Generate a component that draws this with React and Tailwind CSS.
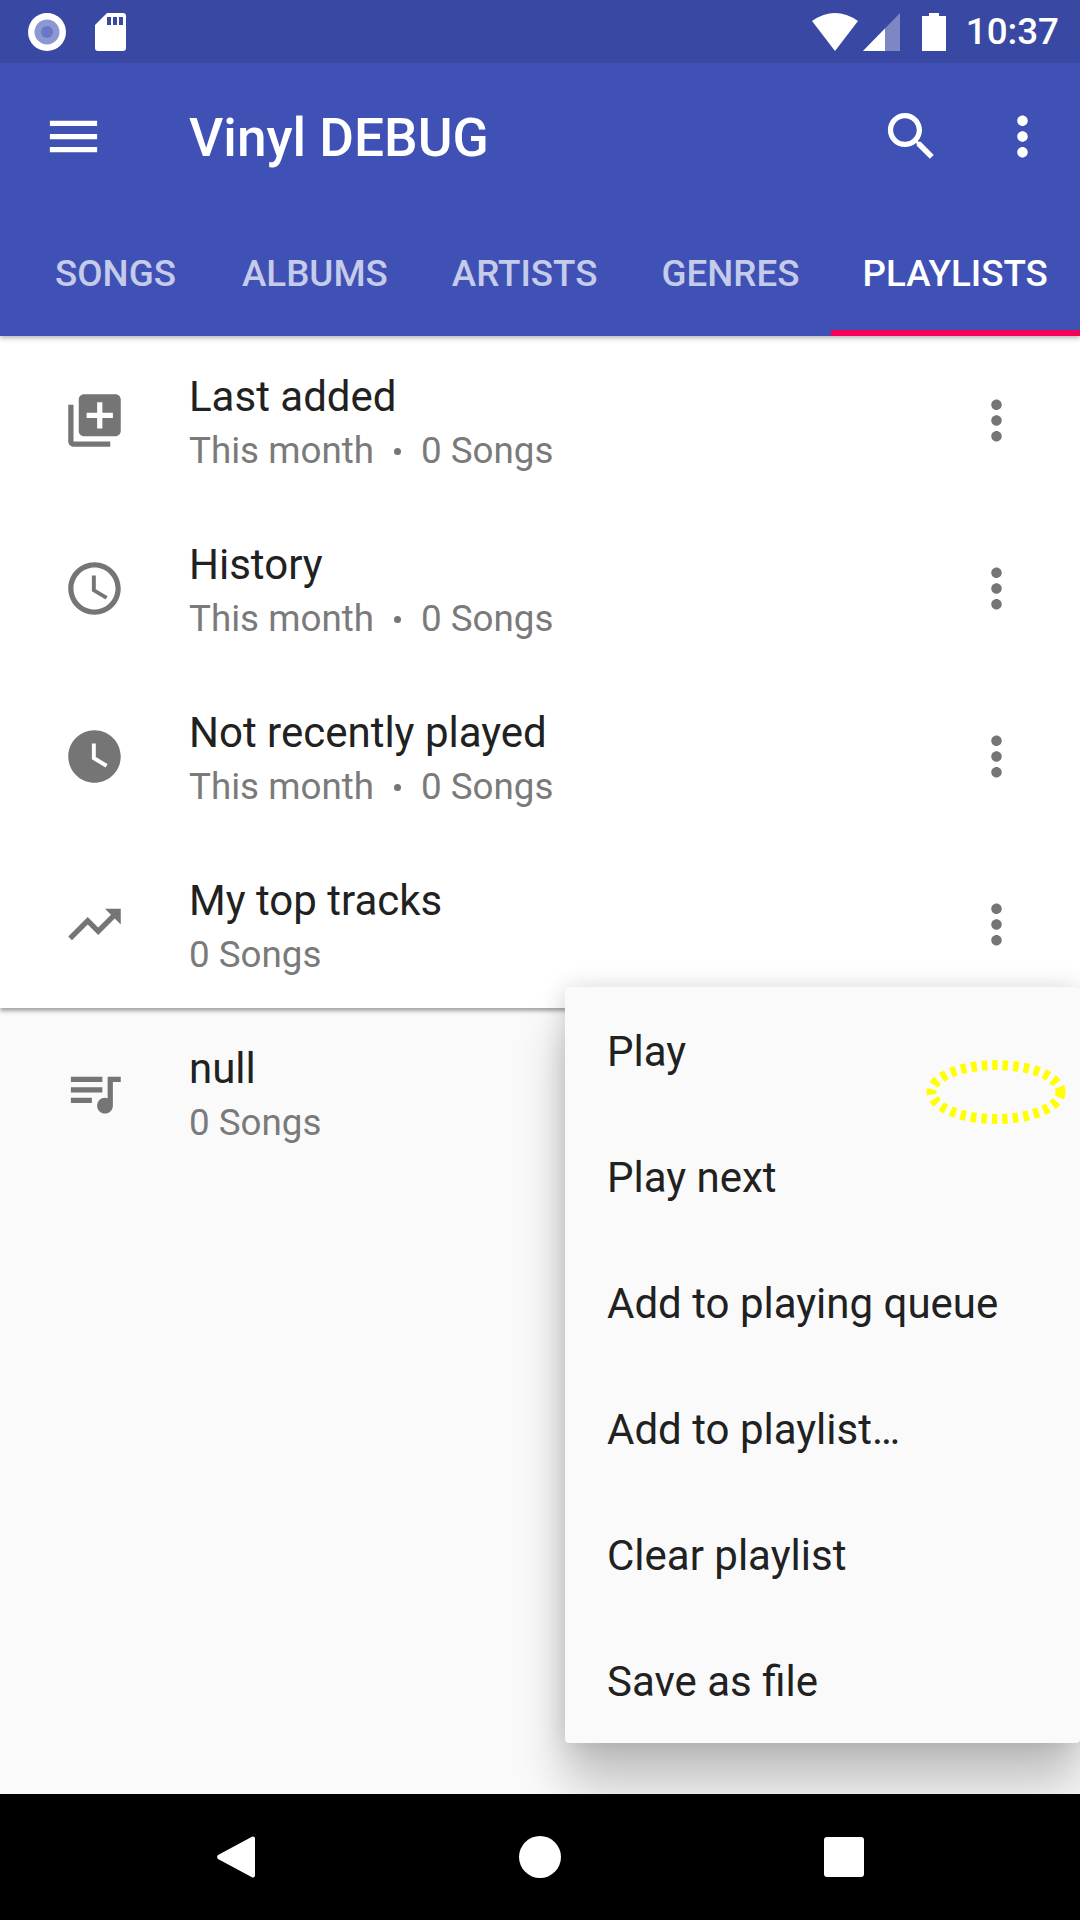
const iconPaths = {
    menu: 'M3 18h18v-2H3v2zm0-5h18v-2H3v2zm0-7v2h18V6H3z',
    search: 'M15.5 14h-.79l-.28-.27C15.41 12.59 16 11.11 16 9.5 16 5.91 13.09 3 9.5 3S3 5.91 3 9.5 5.91 16 9.5 16c1.61 0 3.09-.59 4.23-1.57l.27.28v.79l5 4.99L20.49 19l-4.99-5zm-6 0C7.01 14 5 11.99 5 9.5S7.01 5 9.5 5 14 7.01 14 9.5 11.99 14 9.5 14z',
    more: 'M12 8c1.1 0 2-.9 2-2s-.9-2-2-2-2 .9-2 2 .9 2 2 2zm0 2c-1.1 0-2 .9-2 2s.9 2 2 2 2-.9 2-2-.9-2-2-2zm0 6c-1.1 0-2 .9-2 2s.9 2 2 2 2-.9 2-2-.9-2-2-2z',
    libraryAdd: 'M4 6H2v14c0 1.1.9 2 2 2h14v-2H4V6zm16-4H8c-1.1 0-2 .9-2 2v12c0 1.1.9 2 2 2h12c1.1 0 2-.9 2-2V4c0-1.1-.9-2-2-2zm-1 9h-4v4h-2v-4H9V9h4V5h2v4h4v2z',
    accessTime: 'M11.99 2C6.47 2 2 6.48 2 12s4.47 10 9.99 10C17.52 22 22 17.52 22 12S17.52 2 11.99 2zM12 20c-4.42 0-8-3.58-8-8s3.58-8 8-8 8 3.58 8 8-3.58 8-8 8zm.5-13H11v6l5.25 3.15.75-1.23-4.5-2.67z',
    watchLater: 'M12 2C6.5 2 2 6.5 2 12s4.5 10 10 10 10-4.5 10-10S17.5 2 12 2zm4.2 14.2L11 13V7h1.5v5.2l4.5 2.7-.8 1.3z',
    trendingUp: 'M16 6l2.29 2.29-4.88 4.88-4-4L2 16.59 3.41 18l6-6 4 4 6.3-6.29L22 12V6z',
    queueMusic: 'M15 6H3v2h12V6zm0 4H3v2h12v-2zM3 16h8v-2H3v2zM17 6v8.18c-.31-.11-.65-.18-1-.18-1.66 0-3 1.34-3 3s1.34 3 3 3 3-1.34 3-3V8h3V6h-5z',
};

function Icon({ name, className }) {
    return (
        <svg viewBox="0 0 24 24" className={`w-[63px] h-[63px] shrink-0 fill-current ${className}`}>
            <path d={iconPaths[name]} />
        </svg>
    );
}

const tabs = [
    { label: 'SONGS', className: 'pl-[32px] pr-[34px]' },
    { label: 'ALBUMS', className: 'px-[32px]' },
    { label: 'ARTISTS', className: 'px-[32px]' },
    { label: 'GENRES', className: 'pl-[32px] pr-[31px]' },
];

const playlists = [
    { icon: 'libraryAdd', title: 'Last added', month: true },
    { icon: 'accessTime', title: 'History', month: true },
    { icon: 'watchLater', title: 'Not recently played', month: true },
    { icon: 'trendingUp', title: 'My top tracks' },
];

const menuItems = ['Play', 'Play next', 'Add to playing queue', 'Add to playlist…', 'Clear playlist', 'Save as file'];

function PlaylistRow({ icon, title, month }) {
    return (
        <div className="h-[168px] flex items-center pl-[63px] pr-[52px]">
            <Icon name={icon} className="text-[#757575]" />
            <div className="ml-[63px] flex-1 min-w-0 pt-[8px]">
                <div className="text-[42px] leading-[54px] text-[#212121]">{title}</div>
                <div className="text-[36.75px] leading-[54px] text-[#7a7a7a] flex items-center">
                    {month && <span>This month</span>}
                    {month && (
                        <span className="w-[47px] flex justify-center">
                            <span className="w-[7px] h-[7px] rounded-full bg-[#757575]" />
                        </span>
                    )}
                    <span>0 Songs</span>
                </div>
            </div>
            <Icon name="more" className="text-[#757575]" />
        </div>
    );
}

function StatusBar() {
    return (
        <div className="h-[63px] bg-[#3949a3] flex items-center pl-[28px] pr-[21px]">
            <svg viewBox="0 0 38 38" className="w-[38px] h-[38px]">
                <circle cx="19" cy="19" r="19" fill="#ffffff" />
                <circle cx="19" cy="19" r="12.5" fill="#8c97d3" />
                <circle cx="19" cy="19" r="6" fill="#6a78c4" />
            </svg>
            <svg viewBox="0 0 31 38" className="w-[31px] h-[38px] ml-[29px]">
                <path d="M12 0h16a3 3 0 0 1 3 3v32a3 3 0 0 1-3 3H3a3 3 0 0 1-3-3V12z" fill="#ffffff" />
                <path d="M12 4h4v8h-4zM18 4h4v8h-4zM24 4h4v8h-4z" fill="#3949a3" />
            </svg>
            <div className="flex-1" />
            <svg viewBox="0 0 46 38" className="w-[46px] h-[38px]">
                <path d="M23 38L0 8Q23-8 46 8z" fill="#ffffff" />
            </svg>
            <svg viewBox="0 0 37 38" className="w-[37px] h-[38px] ml-[5px]">
                <path d="M0 38L37 0v38z" fill="#7c87c4" />
                <path d="M0 38L22 15.4V38z" fill="#ffffff" />
            </svg>
            <svg viewBox="0 0 24 38" className="w-[24px] h-[38px] ml-[22px]">
                <path d="M7 0h10v3h7v35H0V3h7z" fill="#ffffff" />
            </svg>
            <span className="ml-[20px] pt-[1px] text-[36.75px] leading-none font-medium text-white">10:37</span>
        </div>
    );
}

function Toolbar() {
    return (
        <div className="h-[147px] bg-[#3f51b5] flex items-center pl-[42px] pr-[26px] text-white">
            <Icon name="menu" />
            <span className="ml-[84px] flex-1 pt-[4px] text-[53.2px] font-medium leading-none">Vinyl DEBUG</span>
            <Icon name="search" />
            <Icon name="more" className="ml-[48px]" />
        </div>
    );
}

function Tabs() {
    return (
        <div className="h-[126px] bg-[#3f51b5] flex pl-[23px] text-[36.75px] font-medium">
            {tabs.map(tab => (
                <div key={tab.label} className={`pt-[2px] flex items-center text-[#c5cbe9] ${tab.className}`}>{tab.label}</div>
            ))}
            <div className="flex-1 flex items-center justify-center text-white border-b-[6px] border-[#f50057] pt-[8px]">PLAYLISTS</div>
        </div>
    );
}

function PopupMenu() {
    return (
        <div className="absolute top-[651px] right-0 w-[515px] rounded-[4px] bg-[#fafafa] shadow-[0_40px_50px_rgba(0,0,0,0.24),0_0_24px_rgba(0,0,0,0.14)]">
            {menuItems.map(item => (
                <div key={item} className="h-[126px] flex items-center pl-[42px] pt-[2px] text-[42px] text-[#212121]">{item}</div>
            ))}
            {/* touch pointer marker */}
            <svg viewBox="0 0 140 66" className="absolute top-[72px] left-[361px] w-[140px] h-[66px]">
                <ellipse cx="70" cy="33" rx="64.5" ry="27" fill="none" stroke="#ffff00" strokeWidth="10" strokeDasharray="5.5 5" />
            </svg>
        </div>
    );
}

export default function App() {
    return (
        <div className="w-[1080px] h-[1920px] flex flex-col overflow-hidden bg-[#fafafa] font-['Roboto',sans-serif]">
            <div className="relative z-20 shadow-[0_2px_5px_rgba(0,0,0,0.3)]">
                <StatusBar />
                <Toolbar />
                <Tabs />
            </div>
            <div className="relative flex-1 overflow-hidden">
                <div className="bg-white shadow-[0_3px_4px_rgba(0,0,0,0.35)]">
                    {playlists.map(row => <PlaylistRow key={row.title} {...row} />)}
                </div>
                <PlaylistRow icon="queueMusic" title="null" />
                <PopupMenu />
            </div>
            <div className="h-[126px] bg-black relative z-20 flex items-center">
                <div className="w-[217px]" />
                <svg viewBox="0 0 38 42" className="w-[38px] h-[42px]">
                    <path d="M36 0.5a2 2 0 0 1 2 2v37a2 2 0 0 1-2 2a2 2 0 0 1-1.5-.5L1 23a3 3 0 0 1 0-4L34.5 1a2 2 0 0 1 1.5-.5z" fill="#ffffff" />
                </svg>
                <div className="w-[42px] h-[42px] rounded-full bg-white ml-[264px]" />
                <div className="w-[40px] h-[40px] rounded-[3px] bg-white ml-[263px]" />
            </div>
        </div>
    );
}
